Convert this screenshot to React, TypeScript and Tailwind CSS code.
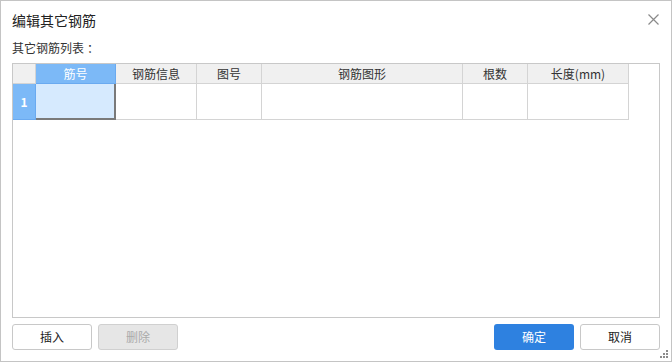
const columns = [
  { key: "no", title: "筋号", width: "w-[80px]" },
  { key: "info", title: "钢筋信息", width: "w-[81px]" },
  { key: "fig", title: "图号", width: "w-[65px]" },
  { key: "shape", title: "钢筋图形", width: "w-[201px]" },
  { key: "count", title: "根数", width: "w-[65px]" },
  { key: "len", title: "长度(mm)", width: "w-[101px]" },
];

function CloseIcon() {
  return (
    <svg width="11" height="11" viewBox="0 0 11 11" className="mr-[1px]">
      <path d="M0.5 0.5 L10.5 10.5 M10.5 0.5 L0.5 10.5" stroke="#8a8a8a" strokeWidth="1.2" />
    </svg>
  );
}

function ResizeGrip() {
  // small dotted triangle in the bottom-right corner
  const dots = [
    [6, 0],
    [3, 3],
    [6, 3],
    [0, 6],
    [3, 6],
    [6, 6],
  ];
  return (
    <svg width="8" height="8" className="absolute right-[3px] bottom-[3px]">
      {dots.map(([x, y], i) => (
        <rect key={i} x={x} y={y} width="2" height="2" fill="#8c8c8c" />
      ))}
    </svg>
  );
}

export default function App() {
  return (
    <div
      className="relative w-[672px] h-[362px] bg-white border border-[#c4c4c4] flex flex-col px-[11px] text-[#333]"
      style={{ fontFamily: '"Noto Sans CJK SC", "Noto Sans", sans-serif' }}
    >
      {/* Title bar */}
      <div className="h-[37px] flex items-center justify-between">
        <span className="text-[14px] leading-none text-[#222]">编辑其它钢筋</span>
        <CloseIcon />
      </div>

      <div className="h-[20px] leading-[20px] text-[12px] mb-[5px]">
        其它钢筋列表<span className="ml-[3px]">：</span>
      </div>

      {/* Grid */}
      <div className="flex-1 border border-[#c8c8c8] text-[12px]">
        {/* header */}
        <div className="flex h-[20px]">
          <div className="w-[23px] bg-[#f0f0f0] border-r border-b border-[#d4d4d4]" />
          {columns.map((c, i) =>
            i === 0 ? (
              <div
                key={c.key}
                className={`${c.width} bg-[#7cb9f7] border border-l-0 border-t-0 border-[#6aaaf0] text-white flex items-center justify-center`}
              >
                {c.title}
              </div>
            ) : (
              <div
                key={c.key}
                className={`${c.width} bg-[#f0f0f0] border-r border-b border-[#d4d4d4] flex items-center justify-center`}
              >
                {c.title}
              </div>
            )
          )}
        </div>
        {/* row 1 */}
        <div className="flex h-[36px]">
          <div className="w-[23px] bg-[#7cb9f7] border-r border-b border-[#6aaaf0] text-white font-bold flex items-center justify-center">
            1
          </div>
          {columns.map((c, i) =>
            i === 0 ? (
              <div
                key={c.key}
                className={`${c.width} bg-[#d6eafe] border-r-2 border-b-2 border-[#7a7a7a]`}
              />
            ) : (
              <div key={c.key} className={`${c.width} border-r border-b border-[#d4d4d4]`} />
            )
          )}
        </div>
      </div>

      {/* Footer buttons */}
      <div className="flex items-center gap-[6px] mt-[6px] mb-[11px] h-[26px] text-[12px]">
        <button className="w-[80px] h-[26px] rounded-[3px] border border-[#c8c8c8] bg-white text-[#222]">
          插入
        </button>
        <button className="w-[80px] h-[26px] rounded-[3px] border border-[#d0d0d0] bg-[#e6e6e6] text-[#aaa]">
          删除
        </button>
        <div className="flex-1" />
        <button className="w-[80px] h-[26px] rounded-[3px] bg-[#2e81e0] text-white">确定</button>
        <button className="w-[80px] h-[26px] rounded-[3px] border border-[#c8c8c8] bg-white text-[#222]">
          取消
        </button>
      </div>

      <ResizeGrip />
    </div>
  );
}
